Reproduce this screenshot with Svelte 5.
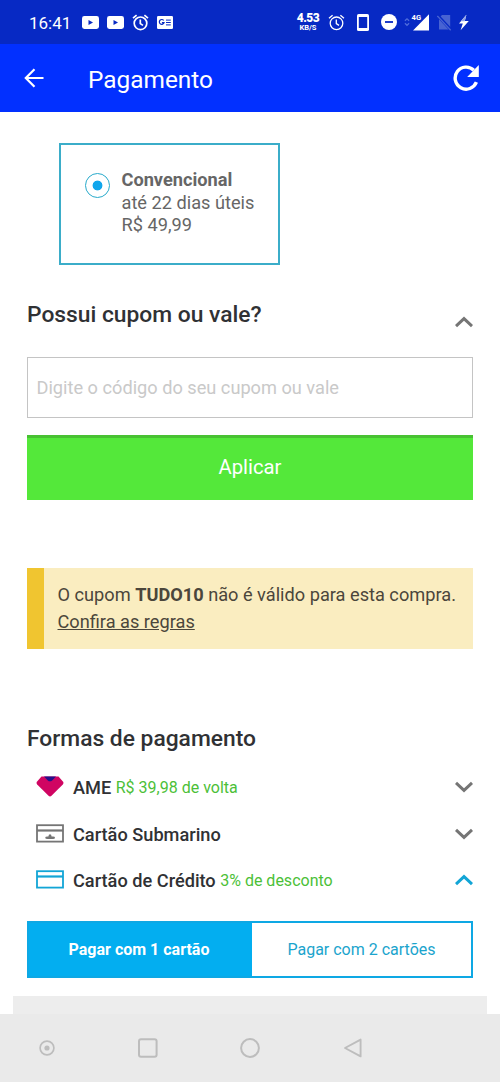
<script>
  let coupon = $state('');
  let couponOpen = $state(true);
  let openMethod = $state('credito');
  let cards = $state(1);

  const methods = [
    { id: 'ame', name: 'AME', note: 'R$ 39,98 de volta' },
    { id: 'submarino', name: 'Cartão Submarino', note: '' },
    { id: 'credito', name: 'Cartão de Crédito', note: '3% de desconto' }
  ];
</script>

{#snippet chevron(up)}
  <svg class="chevron" class:up width="18" height="12" viewBox="0 0 18 12" fill="none">
    <path d="M1 1.9L9 9.4L17 1.9" stroke="currentColor" stroke-width="3"/>
  </svg>
{/snippet}

{#snippet youtube()}
  <svg width="17" height="13" viewBox="0 0 17 13">
    <rect width="17" height="13" rx="2.4" fill="#fff"/>
    <path d="M6.5 3.9L11 6.5L6.5 9.1Z" fill="#0729c4"/>
  </svg>
{/snippet}

{#snippet alarm(thin)}
  <svg width="17" height="17" viewBox="0 0 17 17" fill="none" stroke="#fff" stroke-width={thin ? 1.3 : 1.7}>
    <circle cx="8.5" cy="9.3" r="6.3"/>
    <path d="M8.3 5.5V9.6L11 11.4M1 4.2L4.6 1.2M16 4.2L12.4 1.2"/>
  </svg>
{/snippet}

<div class="screen">
  <div class="status">
    <span class="clock">16:41</span>
    <div class="notifications">
      {@render youtube()}
      {@render youtube()}
      {@render alarm(false)}
      <svg width="16" height="13" viewBox="0 0 16 13">
        <rect width="16" height="13" rx="1.2" fill="#fff"/>
        <path d="M6.7 4.5A2.4 2.4 0 1 0 7 6.7H4.9" fill="none" stroke="#0729c4" stroke-width="1.2"/>
        <path d="M9 4.1H13.8M9 6.5H13.8M9 8.9H13.8" stroke="#0729c4"/>
      </svg>
    </div>
    <div class="speed"><b>4.53</b><small>KB/S</small></div>
    <div class="system">
      {@render alarm(true)}
      <svg class="phone" width="12" height="17" viewBox="0 0 12 17">
        <rect width="12" height="17" rx="1.6" fill="#fff"/>
        <rect x="1.8" y="3" width="8.4" height="11" fill="#0729c4"/>
      </svg>
      <svg class="dnd" width="16" height="16" viewBox="0 0 16 16">
        <circle cx="8" cy="8" r="8" fill="#fff"/>
        <rect x="4" y="7.1" width="8" height="1.8" fill="#0729c4"/>
      </svg>
      <svg class="signal" width="26" height="18" viewBox="0 0 26 18">
        <path d="M.9 7.8L3 5.8L5.1 7.8M.9 10.3L3 12.3L5.1 10.3" fill="none" stroke="#4f6cdb" stroke-width="1.2"/>
        <path d="M9 17.4L25 1.2V17.4Z" fill="#fff"/>
        <text x="7.6" y="7.2">4G</text>
      </svg>
      <svg class="sim" width="15" height="17" viewBox="0 0 15 17">
        <path d="M5 1H13.2V15.4H2V4Z" fill="#4863d2"/>
        <path d="M.5 1.2L14 16" stroke="#0729c4" stroke-width="3"/>
        <path d="M.4 2L13.7 16.3" stroke="#4863d2" stroke-width="1.3"/>
      </svg>
      <svg class="bolt" width="12" height="17" viewBox="0 0 12 17">
        <path d="M8.4.8L1 9.4H4.8L2.6 16.2L10.8 7H6.8Z" fill="#fff"/>
        <path d="M8.4.8L2.8 7.2H6.7Z" fill="#90a2e8"/>
      </svg>
    </div>
  </div>

  <header>
    <svg class="back" width="20" height="20" viewBox="0 0 20 20" fill="none" stroke="#fff" stroke-width="2.2">
      <path d="M19.5 10H2M10.5 1.2L1.8 10L10.5 18.8"/>
    </svg>
    <h1>Pagamento</h1>
    <svg class="reload" width="28" height="28" viewBox="0 0 28 28">
      <path d="M21.8 6.2A11 11 0 1 0 24.4 18.2" fill="none" stroke="#fff" stroke-width="3.4"/>
      <path d="M26.8 1V13H15.2Z" fill="#fff"/>
    </svg>
  </header>

  <main>
    <label class="shipping">
      <span class="radio"></span>
      <span class="shipping-text">
        <strong>Convencional</strong>
        <span>até 22 dias úteis</span>
        <span>R$ 49,99</span>
      </span>
    </label>

    <button class="coupon-head" onclick={() => (couponOpen = !couponOpen)}>
      <span class="title">Possui cupom ou vale?</span>
      {@render chevron(couponOpen)}
    </button>

    {#if couponOpen}
      <input class="coupon-input" placeholder="Digite o código do seu cupom ou vale" bind:value={coupon}/>
      <button class="apply">Aplicar</button>
    {/if}

    <div class="warning">
      <p>O cupom <b>TUDO10</b> não é válido para esta compra.</p>
      <p><span class="rules">Confira as regras</span></p>
    </div>

    <h2 class="title">Formas de pagamento</h2>

    <div class="methods">
      {#each methods as m (m.id)}
        <button class="method" class:active={openMethod === m.id} onclick={() => (openMethod = m.id)}>
          {#if m.id === 'ame'}
            <svg width="28" height="22" viewBox="0 0 28 22">
              <path d="M5.5 .6H22.5L27.3 6Q27.9 7.4 26.8 8.6L15.5 19.8Q14 21.2 12.5 19.8L1.2 8.6Q.1 7.4 .7 6Z" fill="#d00562"/>
              <path d="M8 .6H20L16.2 4.4Q14 6.2 11.8 4.4Z" fill="#23128a"/>
            </svg>
          {:else}
            <svg width="28" height="22" viewBox="0 0 28 22" fill="none" stroke="currentColor">
              <rect x="1" y="2.2" width="26" height="16.4" stroke-width="1.8"/>
              <path d="M1 7.5H27" stroke-width="2.2"/>
              {#if m.id === 'submarino'}
                <path d="M9.2 14.7Q9.2 13.4 11.5 13.4H12.4L13 11.4H15L15.6 13.4H17Q19 13.4 19 14.7Q19 16 17 16H11.5Q9.2 16 9.2 14.7Z" fill="currentColor" stroke="none"/>
              {/if}
            </svg>
          {/if}
          <span class="name">{m.name}</span>
          <span class="note">{m.note}</span>
          {@render chevron(openMethod === m.id)}
        </button>
      {/each}
    </div>

    <div class="cards">
      <button class:selected={cards === 1} onclick={() => (cards = 1)}>Pagar com 1 cartão</button>
      <button class:selected={cards === 2} onclick={() => (cards = 2)}>Pagar com 2 cartões</button>
    </div>

    <div class="panel"></div>
  </main>

  <nav>
    <svg width="16" height="16" viewBox="0 0 16 16">
      <circle cx="8" cy="8" r="6.9" fill="none" stroke="#bdbdbd" stroke-width="1.7"/>
      <circle cx="8" cy="8" r="2.6" fill="#bdbdbd"/>
    </svg>
    <svg width="20" height="20" viewBox="0 0 20 20">
      <rect x="1" y="1.2" width="17.6" height="17.6" rx="2" fill="none" stroke="#bdbdbd" stroke-width="2"/>
    </svg>
    <svg width="20" height="20" viewBox="0 0 20 20">
      <circle cx="10" cy="10" r="8.9" fill="none" stroke="#bdbdbd" stroke-width="2"/>
    </svg>
    <svg width="20" height="20" viewBox="0 0 20 20">
      <path d="M17.6 1.6V18.4L2 10Z" fill="none" stroke="#bdbdbd" stroke-width="1.9" stroke-linejoin="round"/>
    </svg>
  </nav>
</div>

<style>
  :global(body) {
    background: #fff;
  }

  .screen {
    width: 500px;
    height: 1082px;
    display: flex;
    flex-direction: column;
    overflow: hidden;
    background: #fff;
    font-family: Roboto, "Liberation Sans", sans-serif;
    color: #303134;
  }

  svg {
    display: block;
    flex-shrink: 0;
  }

  button {
    font: inherit;
    color: inherit;
    background: none;
    border: 0;
    padding: 0;
    text-align: left;
  }

  h1,
  h2,
  p {
    margin: 0;
    font-weight: 400;
  }

  .status {
    height: 44px;
    flex-shrink: 0;
    display: flex;
    align-items: center;
    padding-left: 29px;
    background: #0729c4;
    color: #fff;
  }

  .clock {
    width: 53px;
    font-size: 17px;
    line-height: 20px;
    padding-top: 2px;
    box-sizing: border-box;
  }

  .notifications {
    display: flex;
    align-items: center;
    gap: 8px;
    width: 214px;
  }

  .speed {
    width: 24px;
    margin-right: 8px;
    display: flex;
    flex-direction: column;
    align-items: center;
    font-weight: 700;
    font-size: 12px;
    line-height: 11px;
    letter-spacing: -0.5px;
  }

  .speed small {
    font-size: 7.5px;
    line-height: 8px;
    letter-spacing: 0;
  }

  .system {
    display: flex;
    align-items: center;
  }

  .phone {
    margin-left: 12px;
  }

  .dnd {
    margin-left: 12px;
  }

  .signal {
    margin-left: 7px;
  }

  .signal text {
    font-size: 7.6px;
    font-weight: 700;
    fill: #fff;
  }

  .sim {
    margin-left: 7px;
  }

  .bolt {
    margin-left: 6px;
  }

  header {
    height: 68px;
    flex-shrink: 0;
    display: flex;
    align-items: center;
    padding: 0 20px 0 24px;
    background: #0230ff;
    color: #fff;
  }

  h1 {
    flex: 1;
    margin-left: 44px;
    padding-top: 3px;
    font-size: 24.4px;
    line-height: 30px;
  }

  main {
    flex: 1;
    display: flex;
    flex-direction: column;
    padding: 31px 27px 0;
  }

  .shipping {
    width: 221px;
    height: 122px;
    box-sizing: border-box;
    margin-left: 32px;
    padding: 24px 0 0 24px;
    display: flex;
    border: 2px solid #3badc9;
    color: #666;
    font-size: 18.2px;
    line-height: 22.5px;
  }

  .radio {
    width: 25px;
    height: 25px;
    box-sizing: border-box;
    margin-right: 11.5px;
    margin-top: 4px;
    border: 1.5px solid #28aacb;
    border-radius: 50%;
    background: radial-gradient(circle, #10a6ec 4.5px, transparent 5.3px);
  }

  .shipping-text {
    display: flex;
    flex-direction: column;
  }

  .shipping strong {
    font-weight: 700;
  }

  .title {
    font-size: 22.8px;
    line-height: 28px;
    font-weight: 500;
  }

  .coupon-head {
    display: flex;
    justify-content: space-between;
    align-items: flex-end;
    height: 28px;
    margin-top: 36px;
    color: #303134;
  }

  .chevron {
    color: #757575;
  }

  .coupon-head .chevron {
    margin-bottom: 1px;
  }

  .chevron.up {
    transform: rotate(180deg);
  }

  .coupon-input {
    height: 61px;
    box-sizing: border-box;
    margin-top: 28px;
    padding: 0 8.5px;
    border: 1.5px solid #c4c4c4;
    border-radius: 0;
    outline: none;
    font: inherit;
    font-size: 18.2px;
  }

  .coupon-input::placeholder {
    color: #c9c9c9;
    opacity: 1;
  }

  .apply {
    height: 65px;
    box-sizing: border-box;
    margin-top: 17px;
    padding-bottom: 5px;
    border-top: 3px solid #48c132;
    background: #54e83a;
    color: #fff;
    font-size: 20.3px;
    text-align: center;
  }

  .warning {
    height: 81px;
    box-sizing: border-box;
    margin-top: 68px;
    padding: 13px 0 0 13.5px;
    border-left: 17px solid #f0c530;
    background: #faedc0;
    color: #4b463b;
    font-size: 18.2px;
    line-height: 27px;
    white-space: nowrap;
  }

  .rules {
    text-decoration: underline;
  }

  h2 {
    margin-top: 76px;
  }

  .methods {
    margin-top: 11px;
  }

  .method {
    width: 100%;
    height: 46.5px;
    display: flex;
    align-items: center;
    padding-left: 9px;
    color: #757575;
  }

  .method.active,
  .method.active .chevron {
    color: #12a5d6;
  }

  .name {
    margin-left: 9px;
    padding-top: 1px;
    font-size: 18.2px;
    font-weight: 500;
    color: #303134;
  }

  .note {
    flex: 1;
    margin-left: 4.5px;
    font-size: 16px;
    color: #4cbf38;
  }

  .cards {
    height: 57px;
    flex-shrink: 0;
    box-sizing: border-box;
    display: flex;
    margin-top: 17px;
    border: 2px solid #0ea8e4;
  }

  .cards button {
    width: 219px;
    text-align: center;
    font-size: 16px;
    color: #1ba4cd;
  }

  .cards button:first-child {
    width: 223px;
    padding-right: 3px;
    box-sizing: border-box;
  }

  .cards .selected {
    background: #03aef0;
    color: #fff;
    font-weight: 700;
  }

  .panel {
    flex: 1;
    margin: 18px -14px 0;
    background: #ededed;
  }

  nav {
    height: 68px;
    flex-shrink: 0;
    box-sizing: border-box;
    display: flex;
    align-items: center;
    justify-content: space-between;
    padding: 0 137px 0 39px;
    background: #eaeaea;
  }
</style>
